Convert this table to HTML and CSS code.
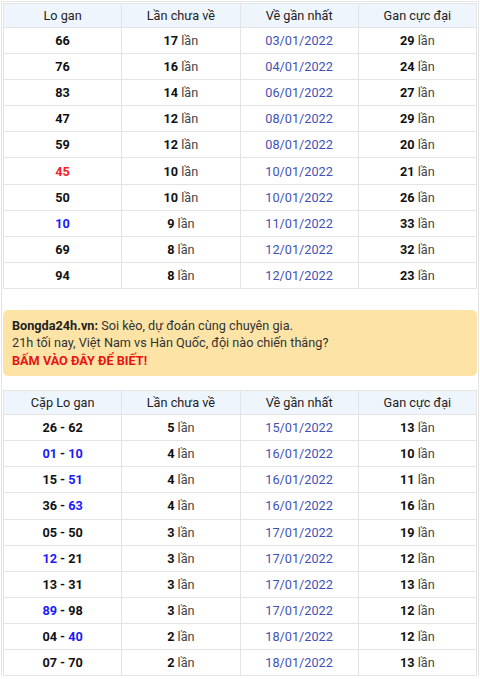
FILE: index.html
```html
<!DOCTYPE html>
<html lang="vi">
<head>
<meta charset="utf-8">
<link rel="stylesheet" href="styles.css">
</head>
<body>
<div class="wrap">
  <table class="gan">
    <thead>
      <tr><th>Lo gan</th><th>Lần chưa về</th><th>Về gần nhất</th><th>Gan cực đại</th></tr>
    </thead>
    <tbody>
      <tr><td><b>66</b></td><td><b>17</b> lần</td><td class="date">03/01/2022</td><td><b>29</b> lần</td></tr>
      <tr><td><b>76</b></td><td><b>16</b> lần</td><td class="date">04/01/2022</td><td><b>24</b> lần</td></tr>
      <tr><td><b>83</b></td><td><b>14</b> lần</td><td class="date">06/01/2022</td><td><b>27</b> lần</td></tr>
      <tr><td><b>47</b></td><td><b>12</b> lần</td><td class="date">08/01/2022</td><td><b>29</b> lần</td></tr>
      <tr><td><b>59</b></td><td><b>12</b> lần</td><td class="date">08/01/2022</td><td><b>20</b> lần</td></tr>
      <tr><td><b class="red">45</b></td><td><b>10</b> lần</td><td class="date">10/01/2022</td><td><b>21</b> lần</td></tr>
      <tr><td><b>50</b></td><td><b>10</b> lần</td><td class="date">10/01/2022</td><td><b>26</b> lần</td></tr>
      <tr><td><b class="blue">10</b></td><td><b>9</b> lần</td><td class="date">11/01/2022</td><td><b>33</b> lần</td></tr>
      <tr><td><b>69</b></td><td><b>8</b> lần</td><td class="date">12/01/2022</td><td><b>32</b> lần</td></tr>
      <tr><td><b>94</b></td><td><b>8</b> lần</td><td class="date">12/01/2022</td><td><b>23</b> lần</td></tr>
    </tbody>
  </table>

  <div class="promo">
    <b class="brand">Bongda24h.vn:</b> Soi kèo, dự đoán cùng chuyên gia.<br>
    21h tối nay, Việt Nam vs Hàn Quốc, đội nào chiến thắng?<br>
    <b class="cta">BẤM VÀO ĐÂY ĐỂ BIẾT!</b>
  </div>

  <table class="gan">
    <thead>
      <tr><th>Cặp Lo gan</th><th>Lần chưa về</th><th>Về gần nhất</th><th>Gan cực đại</th></tr>
    </thead>
    <tbody>
      <tr><td><b>26 - 62</b></td><td><b>5</b> lần</td><td class="date">15/01/2022</td><td><b>13</b> lần</td></tr>
      <tr><td><b><span class="blue">01</span> - <span class="blue">10</span></b></td><td><b>4</b> lần</td><td class="date">16/01/2022</td><td><b>10</b> lần</td></tr>
      <tr><td><b>15 - <span class="blue">51</span></b></td><td><b>4</b> lần</td><td class="date">16/01/2022</td><td><b>11</b> lần</td></tr>
      <tr><td><b>36 - <span class="blue">63</span></b></td><td><b>4</b> lần</td><td class="date">16/01/2022</td><td><b>16</b> lần</td></tr>
      <tr><td><b>05 - 50</b></td><td><b>3</b> lần</td><td class="date">17/01/2022</td><td><b>19</b> lần</td></tr>
      <tr><td><b><span class="blue">12</span> - 21</b></td><td><b>3</b> lần</td><td class="date">17/01/2022</td><td><b>12</b> lần</td></tr>
      <tr><td><b>13 - 31</b></td><td><b>3</b> lần</td><td class="date">17/01/2022</td><td><b>13</b> lần</td></tr>
      <tr><td><b><span class="blue">89</span> - 98</b></td><td><b>3</b> lần</td><td class="date">17/01/2022</td><td><b>12</b> lần</td></tr>
      <tr><td><b>04 - <span class="blue">40</span></b></td><td><b>2</b> lần</td><td class="date">18/01/2022</td><td><b>12</b> lần</td></tr>
      <tr><td><b>07 - 70</b></td><td><b>2</b> lần</td><td class="date">18/01/2022</td><td><b>13</b> lần</td></tr>
    </tbody>
  </table>
</div>
</body>
</html>
```

FILE: styles.css
```css
html, body {
  margin: 0;
  padding: 0;
  background: #fff;
}
body {
  font-family: Roboto, "Noto Sans", Arial, sans-serif;
  font-size: 12.7px;
  color: #444;
}
.wrap {
  margin: 1px 1px 0;
  border: 1px solid #e4e4e4;
  border-bottom: 0;
  padding: 1px 1px 0;
}
.gan {
  width: 100%;
  table-layout: fixed;
  border-collapse: collapse;
  border: 1px solid #e4e4e4;
}
.gan th, .gan td {
  border: 1px solid #e4e4e4;
  padding: 0;
  text-align: center;
  vertical-align: middle;
}
.gan th {
  height: 23px;
  background: #eef5fd;
  font-weight: normal;
  color: #222;
}
.gan td {
  height: 25.1px;
}
.gan td b {
  color: #111;
  font-weight: bold;
}
.gan .blue {
  color: #1a1aff;
}
.gan td b.red {
  color: #f51e1e;
}
.gan td.date {
  color: #3f51b5;
}
.promo {
  margin: 21px 0 14px;
  background: #fde4a6;
  border-radius: 5px;
  padding: 7px 9px 7px 9px;
  line-height: 17.4px;
  color: #333;
}
.promo .brand {
  color: #222;
}
.promo .cta {
  color: #e81414;
}
```
